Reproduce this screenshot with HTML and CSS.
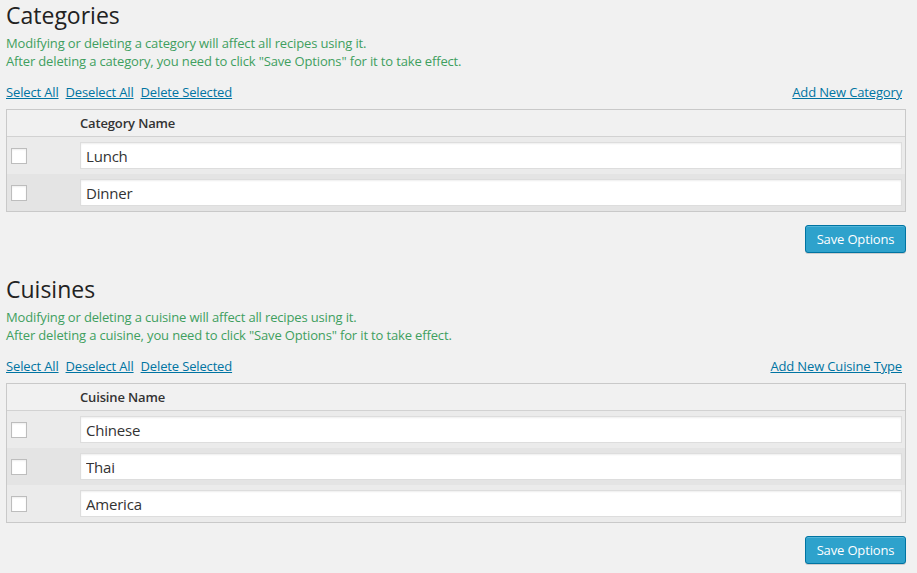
FILE: index.html
```html
<!DOCTYPE html>
<html>
<head>
<meta charset="utf-8">
<link rel="stylesheet" href="styles.css">
</head>
<body>
<div class="wrap">
  <section class="block">
    <h2 class="title">Categories</h2>
    <p class="note">Modifying or deleting a category will affect all recipes using it.<br>After deleting a category, you need to click "Save Options" for it to take effect.</p>
    <div class="actions">
      <div class="left-links"><a href="#">Select All</a><a href="#">Deselect All</a><a href="#">Delete Selected</a></div>
      <a href="#" class="add-link">Add New Category</a>
    </div>
    <div class="list">
      <div class="row head"><div class="c1"></div><div class="c2">Category Name</div></div>
      <div class="row odd"><div class="c1"><span class="cb"></span></div><div class="c2"><input class="field" type="text" value="Lunch"></div></div>
      <div class="row even"><div class="c1"><span class="cb"></span></div><div class="c2"><input class="field" type="text" value="Dinner"></div></div>
    </div>
    <div class="submit"><button class="btn">Save Options</button></div>
  </section>
  <section class="block">
    <h2 class="title">Cuisines</h2>
    <p class="note">Modifying or deleting a cuisine will affect all recipes using it.<br>After deleting a cuisine, you need to click "Save Options" for it to take effect.</p>
    <div class="actions">
      <div class="left-links"><a href="#">Select All</a><a href="#">Deselect All</a><a href="#">Delete Selected</a></div>
      <a href="#" class="add-link">Add New Cuisine Type</a>
    </div>
    <div class="list">
      <div class="row head"><div class="c1"></div><div class="c2">Cuisine Name</div></div>
      <div class="row odd"><div class="c1"><span class="cb"></span></div><div class="c2"><input class="field" type="text" value="Chinese"></div></div>
      <div class="row even"><div class="c1"><span class="cb"></span></div><div class="c2"><input class="field" type="text" value="Thai"></div></div>
      <div class="row odd"><div class="c1"><span class="cb"></span></div><div class="c2"><input class="field" type="text" value="America"></div></div>
    </div>
    <div class="submit"><button class="btn">Save Options</button></div>
  </section>
</div>
</body>
</html>
```
FILE: styles.css
```css
html, body {
  margin: 0;
  padding: 0;
  background: #f1f1f1;
  font-family: "Open Sans", "Liberation Sans", sans-serif;
  color: #444;
}
.wrap {
  width: 900px;
  margin-left: 6px;
}
.block {
  margin-bottom: 21px;
}
.title {
  margin: 0;
  padding-top: 1px;
  font-size: 23px;
  line-height: 29px;
  font-weight: 400;
  color: #222;
}
.note {
  margin: 4px 0 0;
  font-size: 13px;
  line-height: 18px;
  letter-spacing: -0.15px;
  color: #3f9f5f;
}
.actions {
  margin-top: 13px;
  display: flex;
  justify-content: space-between;
  font-size: 13px;
  line-height: 18px;
  letter-spacing: -0.15px;
  padding-right: 4px;
}
.left-links {
  display: flex;
  gap: 7px;
}
.actions a {
  color: #0074a2;
  text-decoration: underline;
}
.list {
  margin-top: 8px;
  border: 1px solid #c9c9c9;
}
.row {
  display: flex;
  align-items: center;
}
.row.head {
  height: 26px;
  border-bottom: 1px solid #d2d2d2;
  background: #f1f1f1;
  font-size: 13px;
  font-weight: 600;
  letter-spacing: -0.15px;
  color: #333;
}
.row.odd { background: #ebebeb; height: 37px; }
.row.even { background: #e4e4e4; height: 37px; }
.c1 {
  box-sizing: border-box;
  width: 73px;
  padding-left: 4px;
  display: flex;
  align-items: center;
}
.c2 {
  flex: 1;
  padding-right: 3px;
}
.cb {
  display: block;
  width: 14px;
  height: 14px;
  margin-top: 1px;
  border: 1px solid #bdbdbd;
  background: #fff;
  box-shadow: inset 0 1px 2px rgba(0,0,0,0.07);
}
.field {
  display: block;
  box-sizing: border-box;
  width: 100%;
  height: 27px;
  margin: 0;
  padding: 0 5px;
  border: 1px solid #ddd;
  box-shadow: inset 0 1px 2px rgba(0,0,0,0.07);
  background: #fff;
  font-family: "Open Sans", "Liberation Sans", sans-serif;
  font-size: 15px;
  letter-spacing: -0.2px;
  color: #333;
  outline: none;
}
.submit {
  margin-top: 13px;
  display: flex;
  justify-content: flex-end;
}
.btn {
  box-sizing: border-box;
  height: 28px;
  width: 101px;
  padding: 0 0 1px;
  white-space: nowrap;
  background: #2ea2cc;
  border: 1px solid #0074a2;
  border-radius: 3px;
  box-shadow: inset 0 1px 0 rgba(120,200,230,0.5), 0 1px 0 rgba(0,0,0,0.15);
  color: #fff;
  font-family: "Open Sans", "Liberation Sans", sans-serif;
  font-size: 13px;
  letter-spacing: -0.15px;
  line-height: 26px;
}
```
